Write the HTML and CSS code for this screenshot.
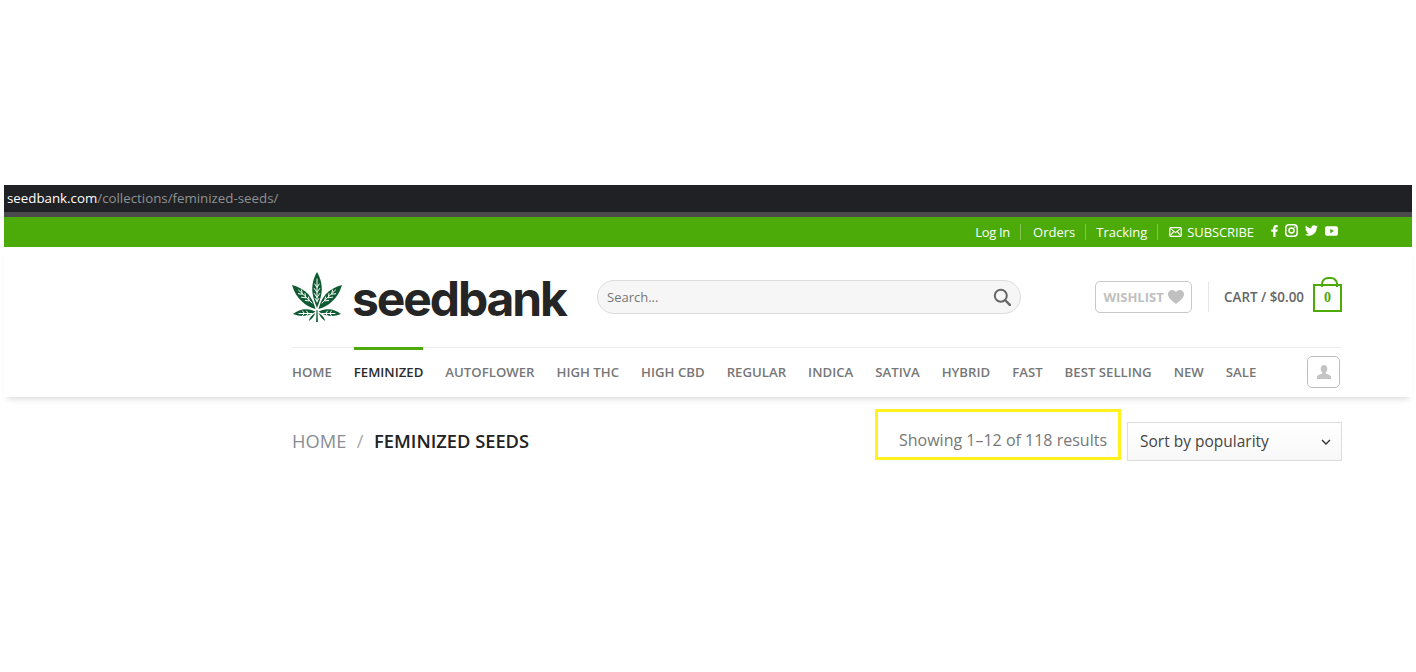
FILE: index.html
```html
<!DOCTYPE html>
<html lang="en">
<head>
<meta charset="utf-8">
<title>Feminized Seeds – Seedbank</title>
<link rel="stylesheet" href="styles.css">
</head>
<body>
<div class="page">
  <div class="urlbar"><span class="url-host">seedbank.com</span><span class="url-path">/collections/feminized-seeds/</span></div>
  <div class="topbar">
    <a class="top-link">Log In</a>
    <a class="top-link">Orders</a>
    <a class="top-link top-link-last">Tracking</a>
    <a class="top-sub">
      <svg class="mail" viewBox="0 0 14 11"><rect x="0.7" y="0.7" width="12.6" height="9.6" rx="1.2" fill="none" stroke="currentColor" stroke-width="1.4"/><path d="M1.5 1.8 7 6.2l5.5-4.4M1.5 9.2 5 5.2M12.5 9.2 9 5.2" fill="none" stroke="currentColor" stroke-width="1.2"/></svg>
      SUBSCRIBE</a>
    <div class="socials">
      <svg class="soc soc-f" viewBox="0 0 7 13"><path d="M4.6 13V7.2h2L7 4.9H4.6V3.5c0-.7.2-1.1 1.1-1.1H7V.3C6.7.2 6 .1 5.2.1 3.4.1 2.2 1.2 2.2 3.2v1.7H0v2.3h2.2V13z" fill="currentColor"/></svg>
      <svg class="soc soc-i" viewBox="0 0 13 13"><rect x="0.8" y="0.8" width="11.4" height="11.4" rx="3.2" fill="none" stroke="currentColor" stroke-width="1.5"/><circle cx="6.5" cy="6.5" r="2.5" fill="none" stroke="currentColor" stroke-width="1.5"/><circle cx="9.9" cy="3.1" r=".8" fill="currentColor"/></svg>
      <svg class="soc soc-t" viewBox="0 0 24 20"><path d="M24 2.4c-.9.4-1.8.7-2.8.8 1-.6 1.8-1.5 2.2-2.7-1 .6-2 1-3.100 1.200C19.300.7 18 .1 16.600.1c-2.700 0-4.900 2.200-4.900 4.900 0 .4 0 .8.100 1.100C7.700 5.900 4.100 4 1.700.9c-.4.700-.7 1.600-.7 2.500 0 1.700.9 3.200 2.200 4.100-.8 0-1.600-.2-2.200-.6v.1c0 2.400 1.700 4.400 3.900 4.800-.4.100-.8.200-1.300.2-.3 0-.6 0-.9-.1.600 2 2.400 3.400 4.600 3.400-1.700 1.300-3.800 2.100-6.100 2.100-.4 0-.8 0-1.200-.1C2.200 18.700 4.800 19.500 7.500 19.500c9.100 0 14-7.500 14-14v-.6c1-.7 1.800-1.500 2.500-2.500z" fill="currentColor"/></svg>
      <svg class="soc soc-y" viewBox="0 0 14 10"><path fill-rule="evenodd" d="M2 0h10a2 2 0 0 1 2 2v6a2 2 0 0 1-2 2H2a2 2 0 0 1-2-2V2a2 2 0 0 1 2-2zm3.700 2.700v4.600L9.700 5z" fill="currentColor"/></svg>
    </div>
  </div>
  <header class="header">
    <div class="container">
      <div class="masthead">
        <a class="logo">
          <svg class="leaf" viewBox="0 0 50 50">
            <g fill="#0f5a32">
              <path d="M25 0c3.500 6 5.500 13 4.500 21-.7 5-2.500 10-4.500 15-2-5-3.800-10-4.500-15-1-8 1-15 4.500-21z"/>
              <path d="M0 13c6.500 1.500 12.500 5 16.500 9.500 3 3.500 5.500 8.500 7 14.500-5.500-1.500-10-4-13.500-7.500C5.500 25.500 2 20 0 13z"/>
              <path d="M50 13c-6.500 1.500-12.500 5-16.500 9.500-3 3.500-5.500 8.500-7 14.500 5.500-1.500 10-4 13.500-7.500C44.500 25.500 48 20 50 13z"/>
              <path d="M1 42c4-3.500 9-5 13.500-4.800 3.500.2 6.500 1.200 9 2.300-3 2-6.500 3.800-10.500 4.300-4 .4-8-.1-12-1.800z"/>
              <path d="M49 42c-4-3.500-9-5-13.500-4.800-3.500.2-6.500 1.200-9 2.300 3 2 6.500 3.800 10.500 4.300 4 .4 8-.1 12-1.800z"/>
              <path d="M23.500 41c-1.500 3-3.500 6-6.500 8 .2-3 2.500-6 6.500-8zM26.500 41c1.500 3 3.500 6 6.500 8-.2-3-2.500-6-6.500-8zM24.500 38h1l.4 12h-1.800z"/>
            </g>
            <g fill="none" stroke="#fff" stroke-width="1" stroke-linecap="round">
              <path d="M25 7v23M22.800 12l2.200 3.500 2.200-3.500M22.300 16.500l2.700 4 2.700-4M22.300 21.500l2.700 4 2.700-4M23.200 26.500l1.800 3 1.800-3"/>
              <path d="M6.500 18 20 31M9.500 18l.8 4.300-4-.6M13 21.500l.8 4.300-4.300-.6M16.500 25l.8 4-4-.6"/>
              <path d="M43.500 18 30 31M40.500 18l-.8 4.300 4-.6M37 21.500l-.8 4.300 4.300-.6M33.500 25l-.8 4 4-.6"/>
              <path d="M7 41.500h13M10.500 39l2 2.500-2 2M14.500 39l2 2.500-2 2M39.500 39l-2 2.500 2 2M35.500 39l-2 2.500 2 2M30 41.500h13"/>
            </g>
          </svg>
          <span class="wordmark">seedbank</span>
        </a>
        <div class="search">
          <span class="search-text">Search...</span>
          <svg class="search-icon" viewBox="0 0 18 18"><circle cx="7.800" cy="7.800" r="6" fill="none" stroke="#666" stroke-width="2"/><path d="M12 12l4.800 4.800" stroke="#666" stroke-width="2.400" stroke-linecap="round"/></svg>
        </div>
        <div class="head-right">
          <a class="wishlist">WISHLIST
            <svg class="heart" viewBox="0 0 16 14"><path d="M8 14C3 10 0 7.500 0 4.200 0 1.800 1.800 0 4.100 0 5.700 0 7.200.8 8 2.200 8.800.8 10.300 0 11.900 0 14.200 0 16 1.800 16 4.200 16 7.500 13 10 8 14z" fill="currentColor"/></svg>
          </a>
          <span class="vline"></span>
          <a class="cart-label">CART / $0.00</a>
          <span class="cart-box">0</span>
        </div>
      </div>
      <nav class="nav">
        <a class="nav-item">HOME</a>
        <a class="nav-item is-active">FEMINIZED</a>
        <a class="nav-item">AUTOFLOWER</a>
        <a class="nav-item">HIGH THC</a>
        <a class="nav-item">HIGH CBD</a>
        <a class="nav-item">REGULAR</a>
        <a class="nav-item">INDICA</a>
        <a class="nav-item">SATIVA</a>
        <a class="nav-item">HYBRID</a>
        <a class="nav-item">FAST</a>
        <a class="nav-item">BEST SELLING</a>
        <a class="nav-item">NEW</a>
        <a class="nav-item">SALE</a>
        <a class="account">
          <svg class="user" viewBox="0 0 14 14"><path d="M7 0c2 0 3.300 1.500 3.300 3.700 0 1.500-.7 3-1.600 3.800v1c1.800.7 5.300 1.500 5.300 3.500v2H0v-2c0-2 3.500-2.800 5.300-3.500v-1C4.400 6.700 3.700 5.200 3.700 3.700 3.700 1.500 5 0 7 0z" fill="currentColor"/></svg>
        </a>
      </nav>
    </div>
  </header>
  <div class="container shop-bar">
    <div class="crumbs"><span class="crumb-home">HOME</span><span class="crumb-sep">/</span><span class="crumb-cur">FEMINIZED SEEDS</span></div>
    <div class="result-box">Showing 1–12 of 118 results</div>
    <div class="sort">Sort by popularity
      <svg class="chev" viewBox="0 0 10 6"><path d="M1 1l4 4 4-4" fill="none" stroke="#333" stroke-width="1.400"/></svg>
    </div>
  </div>
</div>
</body>
</html>
```
FILE: styles.css
```css
* { box-sizing: border-box; }
html, body { margin: 0; background: #fff; }
body { font-family: "Open Sans", "Liberation Sans", sans-serif; height: 672px; overflow: hidden; }
a { color: inherit; text-decoration: none; }
.page { padding: 185px 4px 0; }

.urlbar { height: 32px; background: #202124; border-bottom: 5px solid #4b4b4d; padding-left: 3px; font-size: 13.300px; line-height: 26px; white-space: nowrap; }
.url-host { color: #fff; }
.url-path { color: #8f9194; }

.topbar { height: 30px; background: #4cab08; color: #fff; display: flex; align-items: center; justify-content: flex-end; padding-right: 74px; font-size: 13px; }
.top-link { padding: 0 10px 0 11px; margin-right: 1px; line-height: 16px; border-right: 1px solid rgba(255,255,255,.3); }
.top-link:first-child { padding-left: 0; letter-spacing: -.3px; }
.top-link-last { padding-left: 9px; }
.top-sub { display: flex; align-items: center; gap: 5px; margin-left: 10px; font-size: 13px; letter-spacing: -.1px; }
.mail { width: 13px; height: 10px; }
.socials { display: flex; align-items: center; gap: 7px; margin-left: 17px; margin-top: -3px; }
.soc { display: block; color: #fff; }
.soc-f { width: 7px; height: 12px; }
.soc-i { width: 13px; height: 13px; }
.soc-t { width: 13px; height: 11px; }
.soc-y { width: 13px; height: 10px; }

.header { height: 150px; background: #fff; box-shadow: 0 5px 6px -3px rgba(0,0,0,.14); position: relative; }
.container { width: 1050px; margin-left: 288px; }
.masthead { height: 100px; display: flex; align-items: center; }
.logo { display: flex; align-items: center; width: 305px; flex: none; }
.leaf { width: 50px; height: 50px; flex: none; display: block; }
.wordmark { margin-left: 10px; font-family: "Inter", "Liberation Sans", sans-serif; font-weight: 700; font-size: 48px; letter-spacing: -2.100px; color: #252525; line-height: 50px; position: relative; top: 2px; }
.search { width: 424px; height: 34px; flex: none; border: 1px solid #dcdcdc; border-radius: 17px; background: #f6f6f6; display: flex; align-items: center; justify-content: space-between; padding: 0 9px 0 9px; }
.search-text { font-size: 13px; color: #777; }
.search-icon { width: 18px; height: 18px; }
.head-right { flex: 1; display: flex; align-items: center; justify-content: flex-end; }
.wishlist { width: 97px; height: 32px; border: 1px solid #c8c8c8; border-radius: 5px; display: flex; align-items: center; justify-content: center; gap: 4px; color: #c0c0c0; font-size: 13px; font-weight: 700; }
.heart { width: 16px; height: 14px; }
.vline { width: 1px; height: 30px; background: #e6e6e6; margin: 0 15px 0 16px; }
.cart-label { font-size: 13.400px; font-weight: 600; color: #666; margin-right: 9px; }
.cart-box { width: 29px; height: 28px; border: 2px solid #4cab08; color: #4cab08; font-family: "Liberation Serif", serif; font-weight: 700; font-size: 14px; display: flex; align-items: center; justify-content: center; position: relative; margin-top: 1px; }
.cart-box::before { content: ""; position: absolute; left: 6px; top: -9px; width: 13px; height: 8px; border: 2px solid #4cab08; border-bottom: 0; border-radius: 7px 7px 0 0; }

.nav { height: 50px; border-top: 1px solid #ececec; display: flex; align-items: center; gap: 22px; font-size: 13.200px; font-weight: 600; color: #777; }
.nav-item { position: relative; line-height: 48px; height: 49px; }
.is-active { color: #2b2b2b; }
.is-active::before { content: ""; position: absolute; left: 0; right: 0; top: -1px; height: 3px; background: #4cab08; }
.account { margin-left: auto; margin-right: 2px; width: 33px; height: 32px; border: 1px solid #bdbdbd; border-radius: 5px; display: flex; align-items: center; justify-content: center; color: #c4c4c4; position: relative; top: -1px; }
.user { width: 14px; height: 14px; }

.shop-bar { display: flex; align-items: flex-start; position: relative; }
.crumbs { flex: 1; font-size: 18.300px; padding-top: 31px; line-height: 26px; }
.crumb-home { color: #8a8d94; }
.crumb-sep { color: #aaa; margin: 0 10.500px 0 10.500px; }
.crumb-cur { color: #222; font-weight: 600; }
.result-box { width: 246px; height: 51px; margin-top: 12px; border: 3px solid #fff21f; text-align: right; padding-right: 11px; font-size: 16px; line-height: 57px; color: #777; white-space: nowrap; }
.sort { width: 215px; height: 39px; margin: 25px 0 0 6px; border: 1px solid #dcdcdc; background: linear-gradient(#fff, #f8f8f8); padding-left: 12px; font-size: 15.500px; line-height: 37px; color: #444; position: relative; display: flex; align-items: center; justify-content: space-between; padding-right: 10px; }
.chev { width: 10px; height: 6px; }
```
